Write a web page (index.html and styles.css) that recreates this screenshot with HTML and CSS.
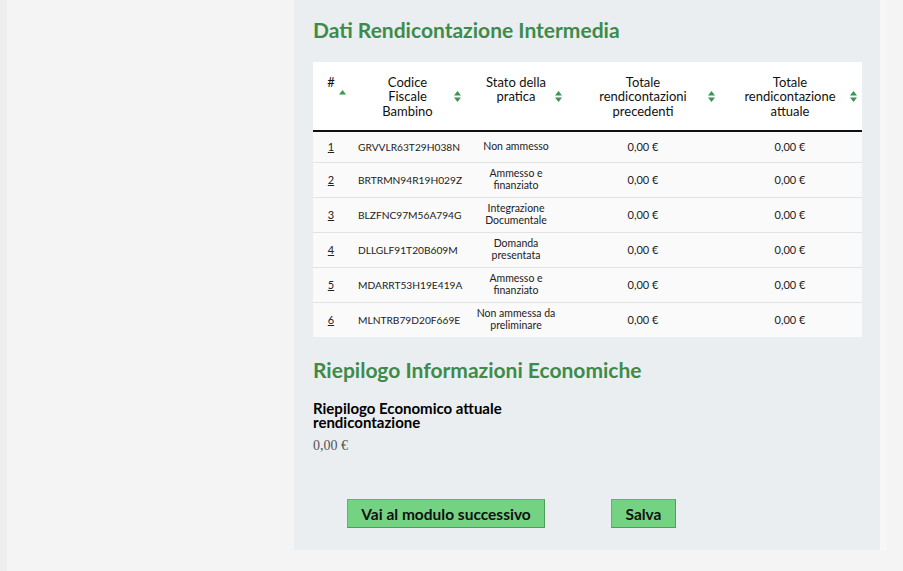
FILE: index.html
```html
<!DOCTYPE html>
<html lang="it">
<head>
<meta charset="utf-8">
<title>Dati Rendicontazione Intermedia</title>
<link rel="stylesheet" href="styles.css">
</head>
<body>
<div class="page">
  <aside class="sidebar"></aside>
  <main class="panel">
    <h2 class="section-title first">Dati Rendicontazione Intermedia</h2>
    <table class="grid">
      <colgroup>
        <col class="c-num"><col class="c-cf"><col class="c-st"><col class="c-prev"><col class="c-cur">
      </colgroup>
      <thead>
        <tr>
          <th class="h-num">#<svg class="sort" width="7" height="11" viewBox="0 0 7 11"><path d="M0 4.5 L3.5 0 L7 4.5 Z"/></svg></th>
          <th class="h-cf">Codice<br>Fiscale<br>Bambino<svg class="sort" width="7" height="11" viewBox="0 0 7 11"><path d="M0 4.5 L3.5 0 L7 4.5 Z M0 6.5 L7 6.5 L3.5 11 Z"/></svg></th>
          <th class="h-st">Stato della<br>pratica<svg class="sort" width="7" height="11" viewBox="0 0 7 11"><path d="M0 4.5 L3.5 0 L7 4.5 Z M0 6.5 L7 6.5 L3.5 11 Z"/></svg></th>
          <th class="h-prev">Totale<br>rendicontazioni<br>precedenti<svg class="sort" width="7" height="11" viewBox="0 0 7 11"><path d="M0 4.5 L3.5 0 L7 4.5 Z M0 6.5 L7 6.5 L3.5 11 Z"/></svg></th>
          <th class="h-cur">Totale<br>rendicontazione<br>attuale<svg class="sort" width="7" height="11" viewBox="0 0 7 11"><path d="M0 4.5 L3.5 0 L7 4.5 Z M0 6.5 L7 6.5 L3.5 11 Z"/></svg></th>
        </tr>
      </thead>
      <tbody>
        <tr class="short">
          <td class="d-num"><a href="#">1</a></td><td class="d-cf">GRVVLR63T29H038N</td><td class="d-st">Non ammesso</td><td class="d-prev">0,00 €</td><td class="d-cur">0,00 €</td>
        </tr>
        <tr>
          <td class="d-num"><a href="#">2</a></td><td class="d-cf">BRTRMN94R19H029Z</td><td class="d-st">Ammesso e<br>finanziato</td><td class="d-prev">0,00 €</td><td class="d-cur">0,00 €</td>
        </tr>
        <tr>
          <td class="d-num"><a href="#">3</a></td><td class="d-cf">BLZFNC97M56A794G</td><td class="d-st">Integrazione<br>Documentale</td><td class="d-prev">0,00 €</td><td class="d-cur">0,00 €</td>
        </tr>
        <tr>
          <td class="d-num"><a href="#">4</a></td><td class="d-cf">DLLGLF91T20B609M</td><td class="d-st">Domanda<br>presentata</td><td class="d-prev">0,00 €</td><td class="d-cur">0,00 €</td>
        </tr>
        <tr>
          <td class="d-num"><a href="#">5</a></td><td class="d-cf">MDARRT53H19E419A</td><td class="d-st">Ammesso e<br>finanziato</td><td class="d-prev">0,00 €</td><td class="d-cur">0,00 €</td>
        </tr>
        <tr>
          <td class="d-num"><a href="#">6</a></td><td class="d-cf">MLNTRB79D20F669E</td><td class="d-st">Non ammessa da<br>preliminare</td><td class="d-prev">0,00 €</td><td class="d-cur">0,00 €</td>
        </tr>
      </tbody>
    </table>

    <h2 class="section-title second">Riepilogo Informazioni Economiche</h2>
    <div class="field">
      <div class="field-label">Riepilogo Economico attuale rendicontazione</div>
      <div class="field-value">0,00 €</div>
    </div>

    <div class="actions">
      <button class="btn btn-next" type="button">Vai al modulo successivo</button>
      <button class="btn btn-save" type="button">Salva</button>
    </div>
  </main>
  <div class="rightgap"></div>
</div>
</body>
</html>
```

FILE: styles.css
```css
html, body {
  margin: 0;
  padding: 0;
  background: #f4f4f4;
  font-family: Lato, "Open Sans", sans-serif;
}

.page {
  display: flex;
  align-items: flex-start;
  height: 571px;
}

.sidebar {
  width: 287px;
  height: 571px;
  border-left: 7px solid #eeeeee;
  box-sizing: border-box;
  background: #f4f4f4;
}

.panel {
  width: 586px;
  height: 550px;
  box-sizing: border-box;
  margin-left: 7px;
  background: #ebeef0;
  padding: 0 18px 0 19px;
  display: flex;
  flex-direction: column;
}

.rightgap {
  width: 7px;
  height: 551px;
  background: #f7f7f7;
}

.section-title {
  margin: 0;
  color: #3d8b4a;
  font-size: 21px;
  font-weight: 700;
  line-height: 24px;
}

.section-title.first {
  margin-top: 18px;
  margin-bottom: 20px;
}

.section-title.second {
  margin-top: 21px;
}

.grid {
  border-collapse: collapse;
  table-layout: fixed;
  width: 549px;
  background: #fafafa;
}

.c-num { width: 32px; }
.c-cf { width: 125px; }
.c-st { width: 102px; }
.c-prev { width: 152px; }
.c-cur { width: 138px; }

.grid thead tr {
  background: #ffffff;
  height: 69px;
}

.grid th {
  position: relative;
  vertical-align: top;
  text-align: center;
  font-size: 13px;
  line-height: 14.3px;
  font-weight: 400;
  color: #111;
  padding: 13px 0 0 0;
  border-bottom: 2px solid #111;
}

.grid th .sort {
  position: absolute;
  top: 50%;
  margin-top: -5px;
  fill: #3a9650;
}

.h-num { padding-left: 4px !important; }
.h-num .sort { right: -1px; margin-top: -6px !important; }
.h-cf .sort { right: 9px; }
.h-st { padding-right: 10px !important; }
.h-st .sort { right: 10px; }
.h-prev { padding-right: 10px !important; }
.h-prev .sort { right: 9px; }
.h-cur { padding-right: 6px !important; }
.h-cur .sort { right: 5px; }

.grid tbody tr {
  height: 35px;
  border-bottom: 1px solid #e3e3e3;
}

.grid tbody tr.short {
  height: 31px;
}

.grid tbody tr:last-child {
  border-bottom: none;
}

.grid td {
  font-size: 11px;
  line-height: 12px;
  color: #222;
  padding: 5px 0;
  vertical-align: middle;
  text-align: center;
}

.d-num { padding-left: 4px !important; }
.d-num a { color: #222; text-decoration: underline; }
.d-cf {
  text-align: left !important;
  padding-left: 13px !important;
  font-size: 10.2px !important;
}
.d-st {
  padding-right: 10px !important;
  font-size: 10.5px !important;
  line-height: 11.5px !important;
}
.d-prev { padding-right: 10px !important; }
.d-cur { padding-right: 6px !important; }

.field {
  margin-top: 19px;
  width: 260px;
}

.field-label {
  font-size: 15px;
  font-weight: 700;
  line-height: 14px;
  color: #000;
}

.field-value {
  margin-top: 9px;
  font-family: "Liberation Serif", serif;
  font-size: 14px;
  color: #555;
  line-height: 16px;
}

.actions {
  display: flex;
  gap: 66px;
  margin-top: 45px;
  padding-left: 34px;
}

.btn {
  font-family: Lato, "Open Sans", sans-serif;
  font-size: 15.5px;
  font-weight: 700;
  color: #111;
  background: #74d283;
  border: 1px solid #5fb56d;
  border-bottom-color: #4f9e5c;
  border-right-color: #4f9e5c;
  height: 29px;
  padding: 0;
  margin: 0;
}

.btn-next { width: 198px; }
.btn-save { width: 65px; }
```
